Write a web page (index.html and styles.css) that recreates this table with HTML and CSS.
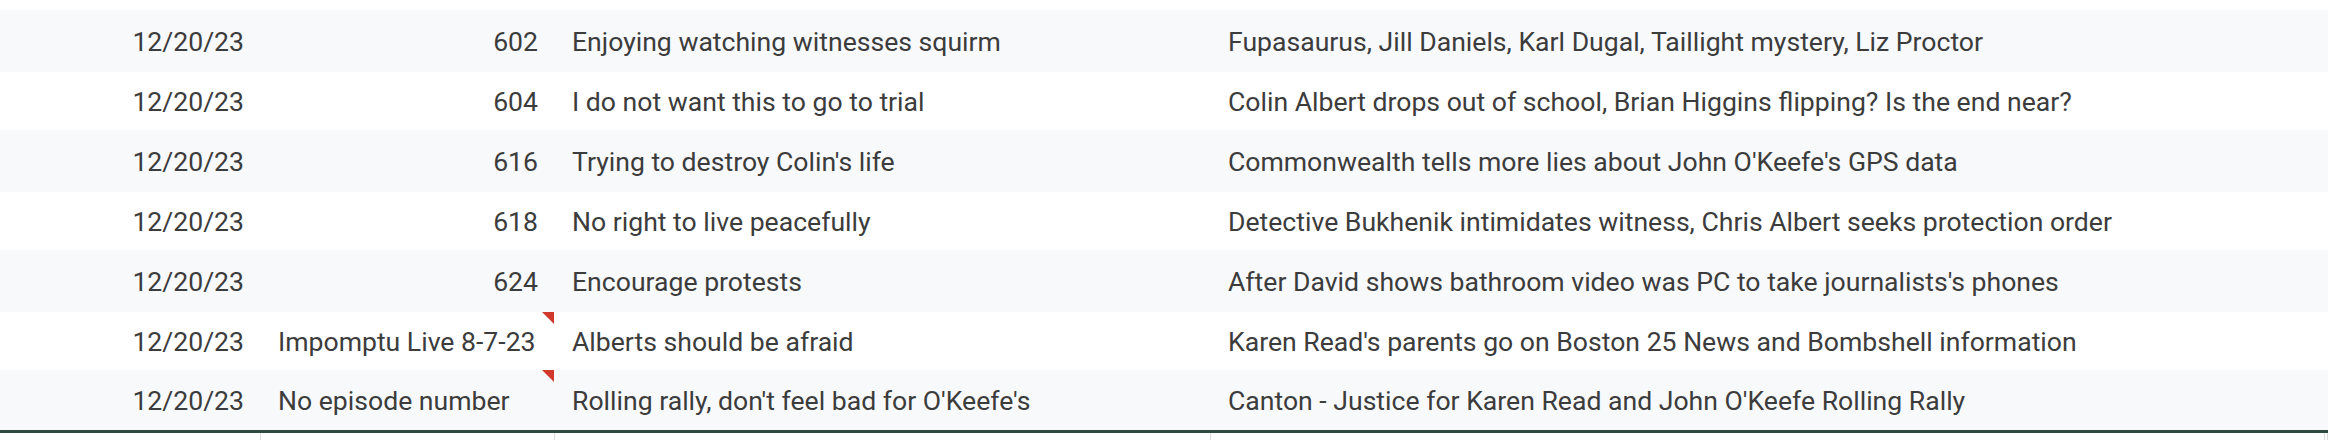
FILE: index.html
```html
<!DOCTYPE html>
<html>
<head>
<meta charset="utf-8">
<link rel="stylesheet" href="styles.css">
</head>
<body>
<div class="sheet">
  <div class="row band">
    <div class="cell right">12/20/23</div>
    <div class="cell right">602</div>
    <div class="cell">Enjoying watching witnesses squirm</div>
    <div class="cell">Fupasaurus, Jill Daniels, Karl Dugal, Taillight mystery, Liz Proctor</div>
    <div class="cell"></div>
  </div>
  <div class="row">
    <div class="cell right">12/20/23</div>
    <div class="cell right">604</div>
    <div class="cell">I do not want this to go to trial</div>
    <div class="cell">Colin Albert drops out of school, Brian Higgins flipping? Is the end near?</div>
    <div class="cell"></div>
  </div>
  <div class="row band">
    <div class="cell right">12/20/23</div>
    <div class="cell right">616</div>
    <div class="cell">Trying to destroy Colin's life</div>
    <div class="cell">Commonwealth tells more lies about John O'Keefe's GPS data</div>
    <div class="cell"></div>
  </div>
  <div class="row">
    <div class="cell right">12/20/23</div>
    <div class="cell right">618</div>
    <div class="cell">No right to live peacefully</div>
    <div class="cell">Detective Bukhenik intimidates witness, Chris Albert seeks protection order</div>
    <div class="cell"></div>
  </div>
  <div class="row band">
    <div class="cell right">12/20/23</div>
    <div class="cell right">624</div>
    <div class="cell">Encourage protests</div>
    <div class="cell">After David shows bathroom video was PC to take journalists's phones</div>
    <div class="cell"></div>
  </div>
  <div class="row">
    <div class="cell right">12/20/23</div>
    <div class="cell note">Impomptu Live 8-7-23</div>
    <div class="cell">Alberts should be afraid</div>
    <div class="cell">Karen Read's parents go on Boston 25 News and Bombshell information</div>
    <div class="cell"></div>
  </div>
  <div class="row band last">
    <div class="cell right">12/20/23</div>
    <div class="cell note">No episode number</div>
    <div class="cell">Rolling rally, don't feel bad for O'Keefe's</div>
    <div class="cell">Canton - Justice for Karen Read and John O'Keefe Rolling Rally</div>
    <div class="cell"></div>
  </div>
  <div class="row foot">
    <div class="gcell"></div>
    <div class="gcell"></div>
    <div class="gcell"></div>
    <div class="gcell"></div>
    <div class="gcell"></div>
  </div>
</div>
</body>
</html>
```

FILE: styles.css
```css
html, body {
  margin: 0;
  padding: 0;
  background: #ffffff;
}
body {
  padding-top: 10px;
  font-family: Roboto, "Liberation Sans", sans-serif;
  font-size: 26.6px;
  color: #3c3c3c;
}
.sheet {
  width: 2328px;
}
.row {
  display: grid;
  grid-template-columns: 261px 294px 656px 1114px 1fr;
  height: 58px;
  background: #ffffff;
}
.row.band {
  height: 62px;
  background: #f8f9fa;
}
.row.band.last {
  height: 60px;
}
.cell {
  display: flex;
  align-items: center;
  padding: 0 17px;
  white-space: nowrap;
  overflow: hidden;
  position: relative;
}
.cell.right {
  justify-content: flex-end;
}
.cell.note::after {
  content: "";
  position: absolute;
  top: 0;
  right: 1px;
  width: 0;
  height: 0;
  border-top: 12px solid #d0392b;
  border-left: 12px solid transparent;
}
.row.foot {
  height: 8px;
  border-top: 3px solid #2e4a3f;
}
.gcell {
  border-right: 1px solid #dadce0;
}
```
